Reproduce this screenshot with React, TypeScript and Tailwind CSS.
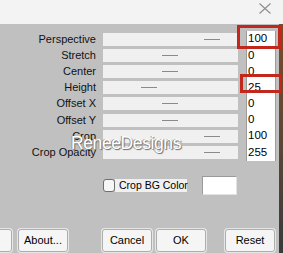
import React from "react";

const rows = [
  { label: "Perspective", value: "100", thumb: 101 },
  { label: "Stretch", value: "0", thumb: 59 },
  { label: "Center", value: "0", thumb: 59 },
  { label: "Height", value: "25", thumb: 38 },
  { label: "Offset X", value: "0", thumb: 59 },
  { label: "Offset Y", value: "0", thumb: 59 },
  { label: "Crop", value: "100", thumb: 101 },
  { label: "Crop Opacity", value: "255", thumb: 101 },
];

const Button = ({ label, className = "" }: { label: string; className?: string }) => (
  <div
    className={`w-[50px] h-[23px] shrink-0 flex items-center justify-center bg-[#f5f5f5] border border-[#adadad] rounded-[3px] shadow-[0_0_0_1px_#e6e6e6] text-[11px] text-black ${className}`}
  >
    {label}
  </div>
);

export default function App() {
  return (
    <div className="relative w-[283px] h-[253px] overflow-hidden flex flex-col font-['Liberation_Sans',Arial,sans-serif] select-none">
      {/* title strip */}
      <div className="h-[24px] shrink-0 bg-[#f3f3f3] flex justify-end items-start pr-[11px] pt-[3px]">
        <svg width="14" height="11" viewBox="0 0 14 11">
          <path d="M1.5 0.5 L12.5 10.5 M12.5 0.5 L1.5 10.5" stroke="#8c8c8c" strokeWidth="1.1" fill="none" />
        </svg>
      </div>

      {/* body */}
      <div className="flex-1 flex bg-[#c0c0c0]">
        <div className="flex-1 flex flex-col">
          <div className="flex flex-col pt-[7px]">
            {rows.map((r) => (
              <div key={r.label} className="h-[16.2px] flex items-center">
                <div className="w-[97px] pr-[1px] text-right text-[11px] leading-none text-[#111] whitespace-nowrap">{r.label}</div>
                <div className="ml-[6px] w-[135px] h-[13px] bg-[#f0f0f0] flex items-center">
                  <div className="h-px w-[16px] bg-[#8a8a8a]" style={{ marginLeft: r.thumb }} />
                </div>
                <div className="ml-[8px] w-[30px] h-full bg-white border-x border-[#9c9c9c] flex items-center pl-[1px] text-[11.5px] leading-none text-black">
                  {r.value}
                </div>
              </div>
            ))}
          </div>

          <div className="flex items-center mt-[15px] h-[19px]">
            <div className="ml-[103px] w-[12px] h-[13px] shrink-0 rounded-[3px] border border-[#6e6e6e] bg-[#f6f6f6]" />
            <div className="h-[13px] w-[72px] shrink-0 bg-[#f0f0f0] flex items-center pl-[4px] text-[10.5px] leading-none text-black whitespace-nowrap">
              Crop BG Color
            </div>
            <div className="ml-[15px] w-[35px] h-[19px] shrink-0 bg-white border border-t-[#9a9a9a] border-l-[#9a9a9a] border-r-[#e2e2e2] border-b-[#e2e2e2]" />
          </div>

          <div className="flex items-center mt-[34px]">
            <Button label="" className="-ml-[38px]" />
            <Button label="About..." className="ml-[6px]" />
            <Button label="Cancel" className="ml-[34px]" />
            <Button label="OK" className="ml-[4px]" />
            <Button label="Reset" className="ml-[19px]" />
          </div>
        </div>
        <div className="w-[4px] bg-linear-to-b from-[#7a4b2c] via-[#5e4636] to-[#3a3a3a]" />
      </div>

      {/* red highlight frames */}
      <div className="absolute left-[237px] top-[25px] w-[44px] h-[24px] border-[3px] border-[#c1281b]" />
      <div className="absolute left-[240px] top-[74px] w-[42px] h-[19px] border-[3px] border-[#c1281b]" />

      {/* watermark */}
      <div className="absolute left-[71px] top-[130px] text-[17.5px] tracking-[-0.4px] text-white [text-shadow:1px_1px_1px_#6a6a6a,-1px_0_0_#9a9a9a]">
        ReneeDesigns
      </div>
    </div>
  );
}
